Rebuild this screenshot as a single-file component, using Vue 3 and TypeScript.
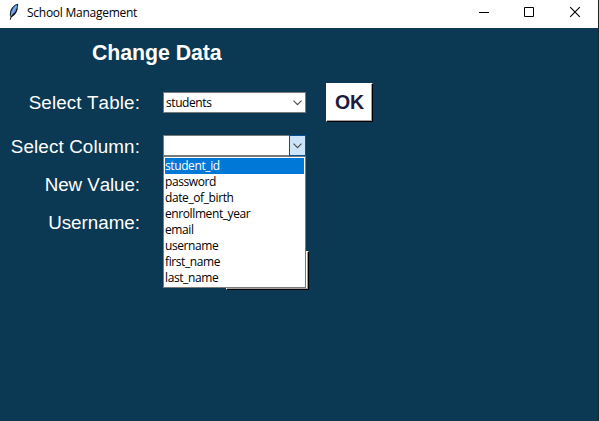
<script setup lang="ts">
import { ref } from 'vue'

const table = ref('students')
const highlighted = ref('student_id')
const columns: string[] = [
  'student_id',
  'password',
  'date_of_birth',
  'enrollment_year',
  'email',
  'username',
  'first_name',
  'last_name',
]
</script>

<template>
  <div class="window">
    <header class="titlebar">
      <svg class="feather" width="12" height="18" viewBox="0 0 12 18">
        <path d="M9.800 .8C7 1.300 3.300 4.300 2.200 8.200L1.800 12.500l1.400 1.900C6.800 12.500 9.100 9.500 9.500 5.600L10.200 1.800z" fill="#17202c" />
        <path d="M9.100 1.600C6.500 3 3.900 6 3.100 9L2.900 12.200C5.600 11 8 8.500 8.700 5.500z" fill="#5b93e2" />
        <path d="M8.300 3C6.300 6 4.200 9.500 3 13" fill="none" stroke="#9dc2f3" stroke-width=".9" />
        <path d="M9.300 5.500C8.600 9 6.500 12 3.100 13.500L2.300 16.800" fill="none" stroke="#111" stroke-width="1" />
      </svg>
      <span class="caption">School Management</span>
      <div class="controls">
        <svg width="46" height="28" viewBox="0 0 46 28"><path d="M19 12.500h10" stroke="#000" /></svg>
        <svg width="46" height="28" viewBox="0 0 46 28"><path d="M18.500 7.500h9v9h-9z" fill="none" stroke="#000" /></svg>
        <svg width="46" height="28" viewBox="0 0 46 28"><path d="M18.200 7.200l9.600 9.600M27.800 7.200l-9.600 9.600" stroke="#000" stroke-width="1.100" /></svg>
      </div>
    </header>
    <main class="content">
      <h1>Change Data</h1>
      <div class="form">
        <label class="wide">Select Table:</label>
        <div class="combo">
          <span class="value">{{ table }}</span>
          <span class="arrow"><svg width="9" height="6" viewBox="0 0 9 6"><path d="M.5 .7l4 4 4-4" fill="none" stroke="#505050" stroke-width="1.200" /></svg></span>
        </div>
        <button class="ok">OK</button>
        <label class="wide lower">Select Column:</label>
        <div class="combo">
          <span class="value"></span>
          <span class="arrow open"><svg width="9" height="6" viewBox="0 0 9 6"><path d="M.5 .7l4 4 4-4" fill="none" stroke="#505050" stroke-width="1.200" /></svg></span>
          <ul class="list">
            <li v-for="c in columns" :key="c" :class="{ selected: c === highlighted }" @mouseenter="highlighted = c">{{ c }}</li>
          </ul>
        </div>
        <label class="lower narrow">New Value:</label>
        <label class="lower">Username:</label>
      </div>
      <button class="submit"></button>
    </main>
  </div>
</template>

<style>
body {
  margin: 0;
  overflow: hidden;
}
</style>

<style scoped>
.window {
  box-sizing: border-box;
  width: 599px;
  height: 421px;
  display: flex;
  flex-direction: column;
  border-right: 1px solid #202427;
  background: #0b3953;
  font-family: "Liberation Sans", sans-serif;
}
.titlebar {
  height: 28px;
  display: flex;
  background: #fff;
  flex: none;
}
.feather {
  margin: 3px 7px 0 8px;
}
.caption {
  font: 12px/26px "Open Sans", sans-serif;
  letter-spacing: -0.26px;
  color: #000;
}
.controls {
  display: flex;
  margin-left: auto;
}
.content {
  flex: 1;
}
h1 {
  margin: 0;
  padding: 12px 0 0 92px;
  font-size: 21.33px;
  line-height: 26px;
  font-weight: bold;
  letter-spacing: -0.07px;
  color: #fff;
}
.form {
  display: grid;
  grid-template-columns: 140px 143px 47px;
  grid-template-rows: 39px 47px 29px 47px;
  padding-top: 17px;
  align-items: center;
}
label {
  grid-column: 1;
  text-align: right;
  font-size: 18.8px;
  line-height: 22px;
  font-kerning: none;
  color: #fff;
}
label.wide {
  letter-spacing: 0.13px;
}
label.narrow {
  letter-spacing: -0.08px;
}
label.lower {
  padding-top: 2px;
}
.combo {
  grid-column: 2;
  position: relative;
  box-sizing: border-box;
  width: 143px;
  height: 21px;
  margin-left: 23px;
  display: flex;
  border: 1px solid #7a7a7a;
  background: #fff;
}
.value {
  flex: 1;
  padding-left: 2px;
  font: 12px/20px "Open Sans", sans-serif;
  letter-spacing: -0.42px;
  color: #000;
}
.arrow {
  box-sizing: border-box;
  width: 17px;
  height: 21px;
  margin: -1px -1px 0 0;
  display: flex;
  align-items: center;
  justify-content: center;
}
.arrow.open {
  border: 1px solid #005499;
  background: #cce4f7;
}
.ok {
  grid-column: 3;
  box-sizing: border-box;
  width: 47px;
  height: 39px;
  margin-left: 43px;
  padding: 0;
  border: 1px solid;
  border-color: #fff #000 #000 #fff;
  box-shadow: inset -1px -1px #a0a0a0, inset 1px 1px #fff;
  background: #fff;
  color: #1c1c3a;
  font: bold 19.5px/35px "Liberation Sans", sans-serif;
}
.list {
  position: absolute;
  z-index: 2;
  left: -1px;
  top: 20px;
  box-sizing: border-box;
  width: 143px;
  margin: 0;
  padding: 1px;
  list-style: none;
  border: 1px solid #7a7a7a;
  background: #fff;
}
.list li {
  height: 16px;
  font: 12px/16px "Open Sans", sans-serif;
  letter-spacing: -0.4px;
  color: #000;
}
.list li.selected {
  background: #0078d7;
  color: #fff;
}
.submit {
  display: block;
  box-sizing: border-box;
  width: 83px;
  height: 39px;
  margin: 6px 0 0 226px;
  border: 1px solid;
  border-color: #fff #000 #000 #fff;
  box-shadow: inset -1px -1px #a0a0a0;
  background: #fff;
}
</style>
